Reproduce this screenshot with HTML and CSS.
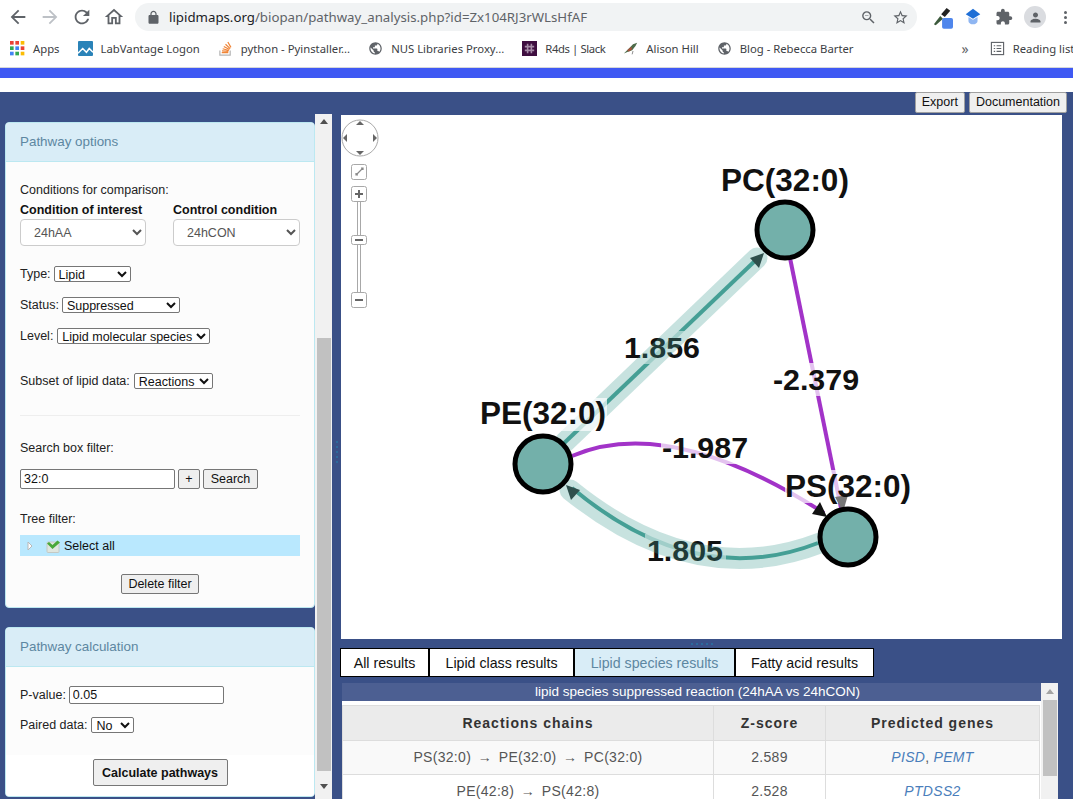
FILE: index.html
```html
<!DOCTYPE html>
<html lang="en">
<head>
  <meta charset="UTF-8" />
  <title>BioPAN pathway analysis</title>
  <link rel="stylesheet" href="styles.css">
</head>

<body>
  <svg class="defs" width="0" height="0">
    <symbol id="ic-globe" viewBox="0 0 24 24"><path d="M12 2C6.48 2 2 6.48 2 12s4.48 10 10 10 10-4.48 10-10S17.52 2 12 2zm-1 17.93c-3.95-.49-7-3.85-7-7.93 0-.62.08-1.21.21-1.79L9 15v1c0 1.1.9 2 2 2v1.93zm6.9-2.54c-.26-.81-1-1.39-1.9-1.39h-1v-3c0-.55-.45-1-1-1H8v-2h2c.55 0 1-.45 1-1V7h2c1.1 0 2-.9 2-2v-.41c2.93 1.19 5 4.06 5 7.41 0 2.08-.8 3.97-2.1 5.39z"/></symbol>
  </svg>

  <!-- ===================  BROWSER CHROME  =================== -->
  <div class="toolbar">
    <div class="nav-icons">
      <svg class="tool" viewBox="0 0 24 24"><path d="M20 11H7.83l5.59-5.59L12 4l-8 8 8 8 1.41-1.41L7.83 13H20v-2z"/></svg>
      <svg class="tool tool-off" viewBox="0 0 24 24"><path d="M4 11h12.170l-5.590-5.590L12 4l8 8-8 8-1.410-1.410L16.170 13H4v-2z"/></svg>
      <svg class="tool" viewBox="0 0 24 24"><path d="M17.65 6.35A7.958 7.958 0 0 0 12 4c-4.42 0-7.99 3.58-7.99 8s3.57 8 7.99 8c3.73 0 6.84-2.55 7.73-6h-2.08A5.99 5.99 0 0 1 12 18c-3.31 0-6-2.69-6-6s2.69-6 6-6c1.66 0 3.14.69 4.22 1.78L13 11h7V4l-2.35 2.35z"/></svg>
      <svg class="tool" viewBox="0 0 24 24"><path d="M12 5.69l5 4.5V18h-2v-6H9v6H7v-7.81l5-4.5M12 3L2 12h3v8h6v-6h2v6h6v-8h3L12 3z"/></svg>
    </div>
    <div class="omnibox">
      <svg class="lock" viewBox="0 0 24 24"><path d="M18 8h-1V6c0-2.76-2.24-5-5-5S7 3.24 7 6v2H6c-1.1 0-2 .9-2 2v10c0 1.1.9 2 2 2h12c1.1 0 2-.9 2-2V10c0-1.1-.9-2-2-2zM9 6c0-1.66 1.34-3 3-3s3 1.34 3 3v2H9V6z"/></svg>
      <span class="url"><b>lipidmaps.org</b>/biopan/pathway_analysis.php?id=Zx104RJ3rWLsHfAF</span>
      <svg class="omni-icon" viewBox="0 0 24 24"><path d="M15.5 14h-.79l-.28-.27A6.47 6.47 0 0 0 16 9.5 6.5 6.5 0 1 0 9.5 16c1.61 0 3.09-.59 4.23-1.57l.27.28v.79l5 4.99L20.49 19l-4.99-5zm-6 0C7.01 14 5 11.99 5 9.5S7.01 5 9.5 5 14 7.01 14 9.5 11.99 14 9.5 14zM7 9h5v1H7z"/></svg>
      <svg class="omni-icon" viewBox="0 0 24 24"><path d="M22 9.24l-7.19-.62L12 2 9.19 8.63 2 9.24l5.46 4.73L5.82 21 12 17.27 18.18 21l-1.63-7.03L22 9.24zM12 15.4l-3.76 2.27 1-4.28-3.32-2.88 4.38-.38L12 6.1l1.71 4.04 4.38.38-3.32 2.88 1 4.28L12 15.4z"/></svg>
    </div>
    <div class="ext-icons">
      <svg class="ext" viewBox="0 0 22 22">
        <path d="M1 19l7-9 3 3-8 7z" fill="#3c5a3c"/>
        <path d="M9 8l6-7 4 3-6 7z" fill="#222"/>
        <rect x="10" y="12" width="12" height="12" rx="2" fill="#4f86ec"/>
      </svg>
      <svg class="ext" viewBox="0 0 22 22">
        <path d="M11 2l8 6-8 5-8-5z" fill="#1f6fd6"/>
        <path d="M6 11v4c0 3 3 4 5 4s5-1 5-4v-4l-5 3z" fill="#8fb6f2"/>
      </svg>
      <svg class="ext ext-puzzle" viewBox="0 0 24 24"><path fill="#5f6368" d="M20.5 11H19V7c0-1.1-.9-2-2-2h-4V3.5C13 2.12 11.88 1 10.5 1S8 2.12 8 3.5V5H4c-1.1 0-1.99.9-1.99 2v3.8H3.5c1.49 0 2.7 1.21 2.7 2.7s-1.21 2.7-2.7 2.7H2V20c0 1.1.9 2 2 2h3.8v-1.5c0-1.49 1.21-2.7 2.7-2.7 1.49 0 2.7 1.21 2.7 2.7V22H17c1.1 0 2-.9 2-2v-4h1.5c1.38 0 2.5-1.12 2.5-2.5S21.88 11 20.5 11z"/></svg>
      <span class="avatar"><svg viewBox="0 0 24 24"><path d="M12 12c2.21 0 4-1.79 4-4s-1.79-4-4-4-4 1.79-4 4 1.79 4 4 4zm0 2c-2.67 0-8 1.34-8 4v2h16v-2c0-2.66-5.33-4-8-4z"/></svg></span>
      <span class="dots"><i></i><i></i><i></i></span>
    </div>
  </div>

  <div class="bookmarks">
    <a class="bm">
      <svg class="bm-icon" viewBox="0 0 14 14">
        <rect x="0" y="0" width="3.4" height="3.4" fill="#ea4335"/><rect x="5" y="0" width="3.4" height="3.4" fill="#ea4335"/><rect x="10" y="0" width="3.4" height="3.4" fill="#fbbc05"/>
        <rect x="0" y="5" width="3.4" height="3.4" fill="#34a853"/><rect x="5" y="5" width="3.4" height="3.4" fill="#4285f4"/><rect x="10" y="5" width="3.4" height="3.4" fill="#ea4335"/>
        <rect x="0" y="10" width="3.4" height="3.4" fill="#4285f4"/><rect x="5" y="10" width="3.4" height="3.4" fill="#34a853"/><rect x="10" y="10" width="3.4" height="3.4" fill="#fbbc05"/>
      </svg>Apps</a>
    <a class="bm">
      <svg class="bm-icon" viewBox="0 0 16 16">
        <rect width="16" height="16" rx="1" fill="#2a83b8"/>
        <path d="M0 13l5-5 4 4 3-4 4 4" fill="none" stroke="#fff" stroke-width="1.6"/>
      </svg>LabVantage Logon</a>
    <a class="bm">
      <svg class="bm-icon" viewBox="0 0 16 16">
        <path d="M2 10v5h11v-5" fill="none" stroke="#b5b5b5" stroke-width="1.3"/>
        <path d="M4 12.5h7M4.300 10.500l6.800.600M5 8.300l6.600 1.800M6.200 5.800l6 3.200M8 3.400l5 4.700M10.500 1l3.300 5.800" fill="none" stroke="#f08537" stroke-width="1.300"/>
      </svg>python - Pyinstaller...</a>
    <a class="bm"><svg class="bm-icon bm-globe"><use href="#ic-globe"/></svg>NUS Libraries Proxy...</a>
    <a class="bm bm-slack">
      <svg class="bm-icon" viewBox="0 0 16 16">
        <rect width="16" height="16" fill="#3f0e40"/>
        <path d="M6 3v10M10 3v10M3 6h10M3 10h10" stroke="#a58ba6" stroke-width="1.700"/>
      </svg>R4ds | Slack</a>
    <a class="bm">
      <svg class="bm-icon" viewBox="0 0 18 16">
        <path d="M1 14l6-6 5-5 5-2-2 4-4 5-5 2z" fill="#4d6b4a"/>
        <path d="M5 10l5-4 1 3-4 3z" fill="#a4523a"/>
        <path d="M12 11l-1 4" stroke="#777" stroke-width="1"/>
      </svg>Alison Hill</a>
    <a class="bm"><svg class="bm-icon bm-globe"><use href="#ic-globe"/></svg>Blog - Rebecca Barter</a>
    <span class="bm-more">»</span>
    <span class="bm-sep"></span>
    <a class="bm bm-read">
      <svg class="bm-icon" viewBox="0 0 16 16">
        <rect x="1.500" y="1.500" width="13" height="13" fill="none" stroke="#5f6368" stroke-width="1.200"/>
        <path d="M4 5h1.500M7 5h5M4 8h1.500M7 8h5M4 11h1.500M7 11h5" stroke="#5f6368" stroke-width="1.200"/>
      </svg>Reading list</a>
  </div>

  <div class="brand-bar"></div>
  <div class="brand-gap"></div>

  <!-- ===================  APP  =================== -->
  <div class="app">
    <div class="top-actions">
      <button class="btn-top">Export</button>
      <button class="btn-top">Documentation</button>
    </div>

    <div class="work">
      <!-- left column -->
      <aside class="side">
        <div class="side-panels">
          <section class="panel panel-options">
            <h3 class="panel-head">Pathway options</h3>
            <div class="panel-body">
              <p class="line-cond">Conditions for comparison:</p>
              <div class="cond-grid">
                <label class="cond-label">Condition of interest</label>
                <label class="cond-label">Control condition</label>
                <select class="cond-select"><option>24hAA</option></select>
                <select class="cond-select"><option>24hCON</option></select>
              </div>
              <div class="field field-type field-tight">Type: <select class="sel-type"><option>Lipid</option></select></div>
              <div class="field field-tight">Status: <select class="sel-status"><option>Suppressed</option></select></div>
              <div class="field">Level: <select class="sel-level"><option>Lipid molecular species</option></select></div>
              <div class="field field-subset">Subset of lipid data: <select class="sel-subset"><option>Reactions</option></select></div>
              <hr class="rule">
              <p class="line-search">Search box filter:</p>
              <div class="search-row">
                <input class="search-input" value="32:0">
                <button class="btn btn-plus">+</button>
                <button class="btn btn-search">Search</button>
              </div>
              <p class="line-tree">Tree filter:</p>
              <div class="tree-row">
                <svg class="tree-arrow" viewBox="0 0 6 10"><path d="M1 1l4 4-4 4z" fill="#fff" stroke="#b8b8b8"/></svg>
                <svg class="tree-check" viewBox="0 0 14 14">
                  <rect x="1" y="3" width="12" height="10.500" rx="1" fill="#dfe6df" stroke="#c4c9c4"/>
                  <path d="M1 4.500l2-1.500 3.500 3L11.500 1.500 14 3.500 6.500 10z" fill="#4aa83a"/>
                </svg>
                <span>Select all</span>
              </div>
              <div class="center-row"><button class="btn btn-delete">Delete filter</button></div>
            </div>
          </section>

          <section class="panel panel-calc">
            <h3 class="panel-head">Pathway calculation</h3>
            <div class="panel-body body-calc">
              <div class="field field-p field-tight">P-value: <input class="pvalue-input" value="0.05"></div>
              <div class="field field-paired">Paired data: <select class="sel-paired"><option>No</option></select></div>
            </div>
            <div class="panel-foot"><button class="btn btn-calc">Calculate pathways</button></div>
          </section>
        </div>

        <div class="side-scroll">
          <span class="arr arr-up"></span>
          <span class="side-thumb"></span>
          <span class="arr arr-down"></span>
        </div>

        <div class="v-split"><i></i><i></i><i></i><i></i><i></i></div>
      </aside>

      <!-- right column -->
      <main class="main">
        <div class="canvas">
          <svg class="graph" viewBox="341 115 721 524">
            <!-- edge lines go under the labels, the pale bands go over them -->
            <path class="edge-teal" d="M560 447L758 258"/>
            <path class="edge-teal" d="M818 543Q695 591 572 488"/>
            <path class="edge-purple" d="M790 258L841 508"/>
            <path class="edge-purple" d="M572 456Q670 414 824 513"/>

            <rect class="label-bg" x="623" y="331" width="79" height="33"/>
            <rect class="label-bg" x="772" y="363" width="89" height="33"/>
            <rect class="label-bg" x="661" y="431" width="89" height="33"/>
            <rect class="label-bg" x="645" y="534" width="81" height="33"/>

            <text class="g-label g-edge" x="662" y="358">1.856</text>
            <text class="g-label g-edge" x="816" y="390">-2.379</text>
            <text class="g-label g-edge" x="705" y="458">-1.987</text>
            <text class="g-label g-edge" x="685" y="561">1.805</text>

            <path class="edge-band" d="M565 442L757 258"/>
            <path class="edge-band" d="M820 543Q695 591 570 490"/>

            <rect class="label-bg" x="480" y="398" width="127" height="33"/>
            <rect class="label-bg" x="785" y="470" width="127" height="33"/>

            <path class="arrow-teal" d="M764 253L750 258L759 268z"/>
            <path class="arrow-teal" d="M566 485L580 490L571 500z"/>
            <path class="arrow-black" d="M827 517L812 514L820 502z"/>
            <path class="arrow-gray" d="M843 512L835 497L848 495z"/>

            <circle class="g-node" cx="785" cy="230" r="28"/>
            <circle class="g-node" cx="543" cy="464" r="28"/>
            <circle class="g-node" cx="848" cy="537" r="28"/>

            <text class="g-label" x="785" y="191">PC(32:0)</text>
            <text class="g-label" x="543" y="424">PE(32:0)</text>
            <text class="g-label" x="848" y="497">PS(32:0)</text>

            <!-- pan and zoom control -->
            <g class="ctl">
              <circle class="ctl-ring" cx="360" cy="138" r="18"/>
              <path class="ctl-arrow" d="M360 121l4 4h-8zM360 155l4-4h-8zM343 138l4-4v8zM377 138l-4-4v8z"/>
              <rect class="ctl-btn" x="351.500" y="164.500" width="15" height="15" rx="2"/>
              <path class="ctl-sign-thin" d="M356 175l7-7M361 168h2v2M356 173v2h2"/>
              <rect class="ctl-track" x="357.500" y="201" width="3" height="92"/>
              <rect class="ctl-btn" x="351.500" y="186.500" width="15" height="15" rx="2"/>
              <path class="ctl-sign" d="M355 194h8M359 190v8"/>
              <rect class="ctl-btn" x="351.500" y="235.500" width="15" height="9" rx="2"/>
              <path class="ctl-sign" d="M355 240h8"/>
              <rect class="ctl-btn" x="351.500" y="292.500" width="15" height="15" rx="2"/>
              <path class="ctl-sign" d="M355 300h8"/>
            </g>
          </svg>
        </div>

        <div class="h-split"><i></i><i></i><i></i><i></i><i></i></div>

        <div class="tabs">
          <a class="tab tab-all">All results</a>
          <a class="tab tab-class">Lipid class results</a>
          <a class="tab tab-species is-active">Lipid species results</a>
          <a class="tab tab-fatty">Fatty acid results</a>
        </div>

        <div class="results">
          <div class="results-main">
            <div class="results-title">lipid species suppressed reaction (24hAA vs 24hCON)</div>
            <table class="results-table">
              <thead>
                <tr><th class="col-chain">Reactions chains</th><th class="col-z">Z-score</th><th>Predicted genes</th></tr>
              </thead>
              <tbody>
                <tr class="odd"><td class="chain">PS(32:0) → PE(32:0) → PC(32:0)</td><td>2.589</td><td><a class="gene">PISD</a>, <a class="gene">PEMT</a></td></tr>
                <tr><td class="chain">PE(42:8) → PS(42:8)</td><td>2.528</td><td><a class="gene">PTDSS2</a></td></tr>
              </tbody>
            </table>
          </div>
          <div class="results-scroll">
            <span class="arr arr-up arr-pale"></span>
            <span class="results-thumb"></span>
          </div>
        </div>
      </main>
    </div>
  </div>
</body>
</html>
```

FILE: styles.css
```css
*{box-sizing:border-box;}

html,body{height:100%;}
body{
  margin:0;
  width:1073px;
  height:799px;
  overflow:hidden;
  background:#fff;
  font-family:"Liberation Sans",Arial,sans-serif;
  font-size:12.5px;
  color:#222;
}
.defs{position:absolute;}

/* ---- browser toolbar ---- */
.toolbar{
  height:34px;
  display:flex;
  align-items:center;
  background:#fff;
}
.nav-icons{
  display:flex;
  align-items:center;
  gap:10px;
  width:135px;
  padding-left:7px;
}
.tool{width:22px;height:22px;fill:#5f6368;flex:none;}
.tool-off{fill:#bdc1c6;}
.omnibox{
  width:782px;
  height:28px;
  border-radius:14px;
  background:#f1f3f4;
  display:flex;
  align-items:center;
  padding:0 8px 0 11px;
}
.lock{width:15px;height:15px;fill:#5f6368;flex:none;}
.url{
  flex:1;
  margin-left:8px;
  font-family:"Noto Sans",sans-serif;
  font-size:13.25px;
  color:#5f6368;
  white-space:nowrap;
}
.url b{font-weight:400;color:#202124;}
.omni-icon{width:17px;height:17px;fill:#5f6368;margin-left:15px;flex:none;}
.ext-icons{
  flex:1;
  display:flex;
  align-items:center;
  padding-left:16px;
  gap:10px;
}
.ext{width:20px;height:20px;flex:none;overflow:visible;}
.ext-puzzle{width:18px;height:18px;margin-left:2px;}
.avatar{
  width:22px;height:22px;border-radius:50%;
  background:#dadce0;
  display:flex;align-items:center;justify-content:center;
  flex:none;
  margin-left:1px;
}
.avatar svg{width:15px;height:15px;fill:#5f6368;}
.dots{display:flex;flex-direction:column;gap:2px;margin-left:8px;}
.dots i{width:3px;height:3px;border-radius:50%;background:#5f6368;display:block;}

/* ---- bookmarks bar ---- */
.bookmarks{
  height:34px;
  display:flex;
  align-items:center;
  padding:0 0 4px 10px;
  gap:18px;
  background:#fff;
  border-bottom:1px solid #d5d7da;
  font-family:"Noto Sans",sans-serif;
  font-size:11.3px;
  color:#3c4043;
  white-space:nowrap;
  overflow:hidden;
}
.bm{display:flex;align-items:center;gap:8px;flex:none;}
.bm-slack{letter-spacing:-.4px;}
.bm-icon{width:15px;height:15px;flex:none;}
.bm-globe{fill:#5f6368;}
.bm-more{margin-left:90px;font-size:14px;color:#5f6368;}
.bm-sep{width:1px;height:16px;background:#c8cacd;margin-left:-7px;}
.bm-read{margin-left:-8px;}

.brand-bar{height:10px;background:#3f59f3;}
.brand-gap{height:14px;background:#fff;}

/* ---- app frame ---- */
.app{
  height:707px;
  background:#3a5087;
  overflow:hidden;
}
.top-actions{
  height:22px;
  display:flex;
  justify-content:flex-end;
  gap:4px;
  padding:0 6px 0 0;
}
.btn-top{
  height:21px;
  padding:0 6px 2px;
  background:#efefef;
  border:1px solid #a0a0a0;
  border-radius:2px;
  font:12.5px "Liberation Sans",Arial,sans-serif;
  color:#111;
}
.work{display:flex;height:685px;}

/* ---- left column ---- */
.side{display:flex;width:341px;flex:none;}
.side-panels{
  width:315px;
  padding:8px 0 0 5px;
  flex:none;
}
.panel{
  background:#fcfcfc;
  border:1px solid #bce8f1;
  border-radius:4px;
  overflow:hidden;
}
.panel-head{
  margin:0;
  height:39px;
  padding:0 14px 2px;
  display:flex;
  align-items:center;
  background:#d9edf7;
  border-bottom:1px solid #bce8f1;
  font-size:13.4px;
  font-weight:400;
  color:#5d87a1;
}
.panel-body{padding:0 14px;}
.panel-options{height:486px;}
.panel-calc{height:170px;margin-top:19px;}

.panel-body p{margin:0;line-height:14px;}
.line-cond{padding-top:21px;}
.cond-grid{
  display:grid;
  grid-template-columns:126px 127px;
  column-gap:27px;
  margin-top:6px;
}
.cond-label{font-weight:700;line-height:14px;margin-bottom:2px;color:#111;}
.cond-select{
  height:27px;
  padding-left:9px;
  background:#fff;
  border:1px solid #ccc;
  border-radius:4px;
  font:12.5px "Liberation Sans",Arial,sans-serif;
  color:#555;
}
.field{
  display:flex;
  align-items:center;
  gap:4px;
  height:16px;
  margin-top:15px;
}
.field-tight{gap:3px;}
.field select,.field input{
  height:16px;
  padding:0;
  background:#fff;
  border:1px solid #767676;
  border-radius:2px;
  font:12.5px "Liberation Sans",Arial,sans-serif;
  color:#111;
}
.field-type{margin-top:20px;}
.field-subset{margin-top:29px;}
.sel-type{width:77px;}
.sel-status{width:118px;}
.sel-level{width:153px;}
.sel-subset{width:79px;}

.rule{border:0;border-top:1px solid #eee;margin:26px 0 0;}
.line-search{margin-top:25px !important;}
.search-row{display:flex;gap:3px;margin-top:14px;}
.search-input{
  width:155px;height:20px;
  padding:0 3px;
  border:1px solid #767676;
  border-radius:2px;
  font:12.5px "Liberation Sans",Arial,sans-serif;
  color:#111;
}
.btn{
  background:#efefef;
  border:1px solid #767676;
  border-radius:2px;
  font:12.5px "Liberation Sans",Arial,sans-serif;
  color:#111;
  padding:0;
}
.btn-plus{width:22px;height:20px;}
.btn-search{width:55px;height:20px;}
.line-tree{margin-top:23px !important;}
.tree-row{
  height:21px;
  margin-top:9px;
  padding-left:7px;
  display:flex;
  align-items:center;
  background:#b9e8fe;
  color:#111;
}
.tree-arrow{width:6px;height:10px;flex:none;}
.tree-check{width:14px;height:14px;flex:none;margin-left:13px;margin-right:4px;}
.center-row{display:flex;justify-content:center;margin-top:18px;}
.btn-delete{width:78px;height:20px;}

.body-calc{height:88px;padding-top:19px;}
.field-p{margin-top:0;height:18px;}
.field-p input{width:155px;height:18px;padding:0 3px;}
.field-paired{margin-top:13px;}
.sel-paired{width:43px;}
.panel-foot{
  height:42px;
  padding-top:4px;
  display:flex;
  justify-content:center;
  background:#fff;
}
.btn-calc{
  width:135px;height:27px;
  font-weight:700;
}

/* ---- scrollbars ---- */
.side-scroll{
  width:17px;
  background:#f1f1f1;
  display:flex;
  flex-direction:column;
  align-items:center;
  padding-top:5px;
  height:685px;
  flex:none;
}
.side-thumb{
  width:14px;
  height:433px;
  margin-top:214px;
  background:#c1c1c1;
}
.arr{width:0;height:0;border-left:4px solid transparent;border-right:4px solid transparent;flex:none;}
.arr-up{border-bottom:5px solid #505050;}
.arr-down{border-top:5px solid #505050;margin-top:13px;}
.arr-pale{border-bottom-color:#a3a3a3;}

/* ---- the little drag handles between the panes ---- */
.v-split{
  width:9px;
  display:flex;
  flex-direction:column;
  align-items:center;
  justify-content:center;
  gap:3px;
  padding-bottom:10px;
}
.h-split{
  height:9px;
  display:flex;
  align-items:center;
  justify-content:center;
  gap:3px;
}
.v-split i,.h-split i{width:2px;height:2px;background:#2c6a9c;display:block;}

/* ---- graph ---- */
.main{width:721px;flex:none;}
.canvas{height:524px;background:#fff;margin-top:1px;}
.graph{display:block;width:721px;height:524px;}
.edge-teal{fill:none;stroke:#46a096;stroke-width:4;}
.edge-band{fill:none;stroke:#46a096;stroke-opacity:.3;stroke-width:21;stroke-linecap:round;}
.edge-purple{fill:none;stroke:#a233c8;stroke-width:4;}
.label-bg{fill:#fff;fill-opacity:.7;}
.g-label{
  font:700 31.5px "Liberation Sans",Arial,sans-serif;
  fill:#111;
  text-anchor:middle;
}
.g-edge{font-size:30.4px;}
.g-node{fill:#73b0aa;stroke:#000;stroke-width:5;}
.arrow-teal{fill:#2f4f4c;}
.arrow-black{fill:#111;}
.arrow-gray{fill:#777;}
.ctl-ring{fill:#fff;stroke:#a8a8a8;stroke-width:1;}
.ctl-arrow{fill:#666;}
.ctl-btn{fill:#fff;stroke:#a8a8a8;}
.ctl-track{fill:#fff;stroke:#a8a8a8;}
.ctl-sign{fill:none;stroke:#666;stroke-width:2;}
.ctl-sign-thin{fill:none;stroke:#888;stroke-width:1.200;}

/* ---- tabs ---- */
.tabs{
  display:flex;
  height:29px;
  margin-left:-1px;
}
.tab{
  display:flex;
  align-items:center;
  justify-content:center;
  background:#fff;
  border:1px solid #000;
  font-size:14.2px;
  color:#111;
}
.tab-all{width:89px;}
.tab-class{width:145px;}
.tab-species{width:161px;}
.tab-fatty{width:139px;}
.tab.is-active{background:#d9edf7;color:#5d87a1;}

/* ---- results table ---- */
.results{
  display:flex;
  width:716px;
  margin:6px 0 0 1px;
  height:120px;
  background:#fff;
}
.results-main{width:699px;flex:none;overflow:hidden;}
.results-title{
  height:18px;
  padding-left:12px;
  background:#4c5f92;
  color:#fff;
  font-size:13.5px;
  line-height:18px;
  text-align:center;
}
.results-table{
  width:698px;
  margin-top:4px;
  border-collapse:collapse;
  table-layout:fixed;
  font-size:14px;
  color:#555;
}
.results-table th,.results-table td{
  border:1px solid #ddd;
  text-align:center;
  padding:0;
}
.results-table th{
  height:35px;
  background:#ebebeb;
  font-size:14px;
  font-weight:700;
  letter-spacing:1px;
  color:#333;
}
.results-table td{height:34px;padding-bottom:2px;letter-spacing:.3px;}
.results-table .chain{word-spacing:2.5px;}
.results-table .odd td{background:#f9f9f9;}
.col-chain{width:371px;}
.col-z{width:112px;}
.gene{color:#4a7ebb;font-style:italic;}
.results-scroll{
  width:17px;
  background:#f1f1f1;
  display:flex;
  flex-direction:column;
  align-items:center;
  padding-top:6px;
}
.results-thumb{width:14px;height:76px;margin-top:6px;background:#c1c1c1;}
```
